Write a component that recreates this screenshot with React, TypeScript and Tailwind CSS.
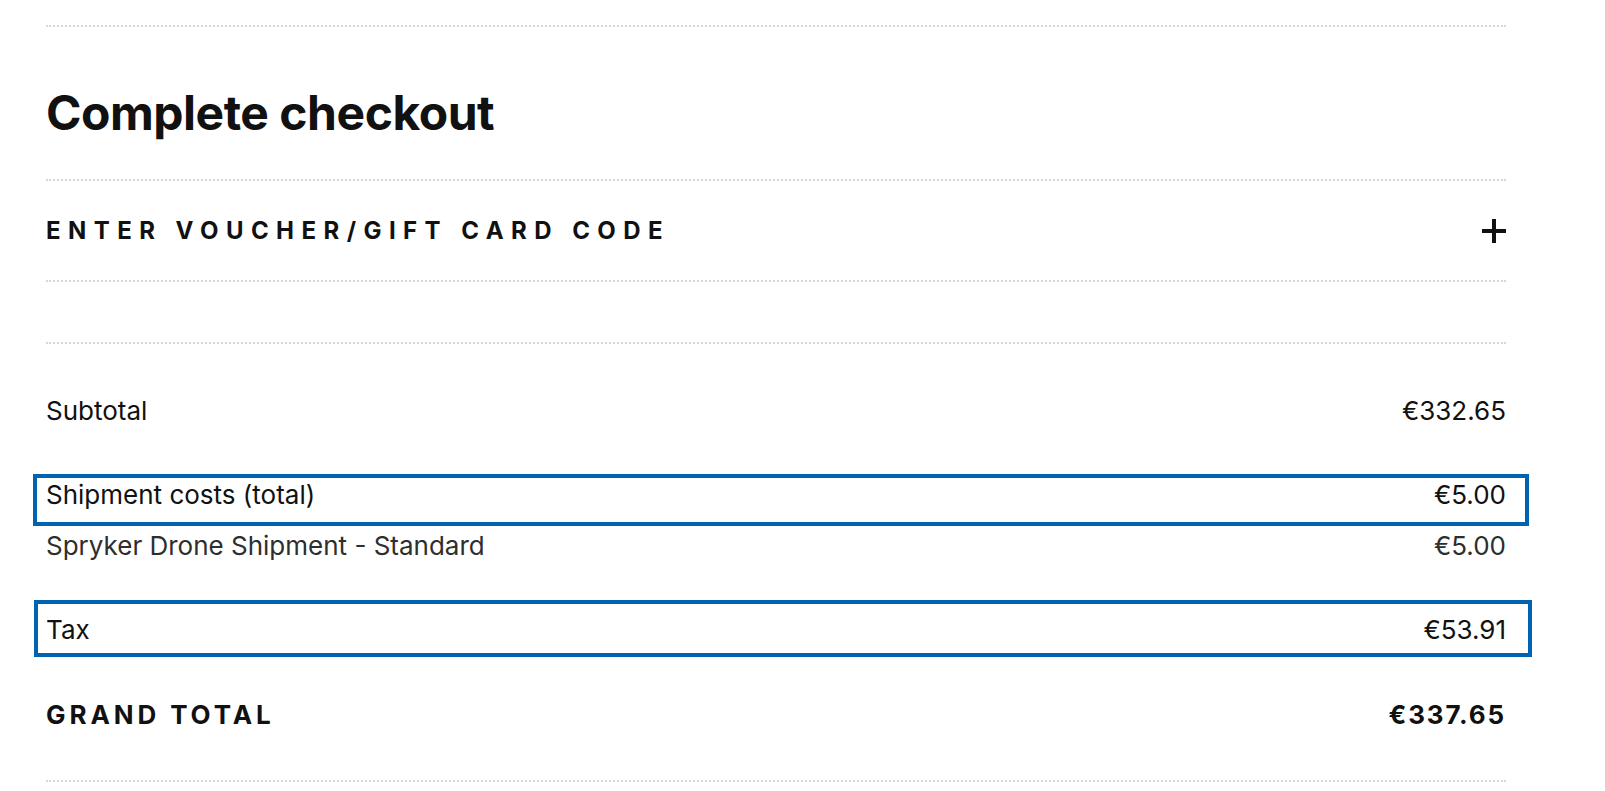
import React from "react";

const Dots = () => <div className="h-0 w-full border-t-2 border-dotted border-[#d6d6d6]" />;

function Row({
  label,
  value,
  className = "",
  textClass = "text-[#111111]",
  children,
}: {
  label: string;
  value: string;
  className?: string;
  textClass?: string;
  children?: React.ReactNode;
}) {
  return (
    <div className={`relative flex h-[40px] items-center justify-between text-[26px] ${textClass} ${className}`}>
      <span>{label}</span>
      <span>{value}</span>
      {children}
    </div>
  );
}

export default function App() {
  return (
    <div className="min-h-[791px] w-full bg-white" style={{ fontFamily: "Inter, 'Noto Sans', sans-serif" }}>
      <div className="ml-[46px] w-[1460px] pt-[25px]">
        <Dots />
        <div className="flex h-[152px] items-center pt-[20px]">
          <h1 className="text-[48px] font-bold leading-none tracking-[-0.01em] text-[#111111]">Complete checkout</h1>
        </div>
        <Dots />
        <div className="flex h-[99px] items-center justify-between">
          <span className="text-[24px] font-bold uppercase tracking-[0.31em] text-[#111111]">Enter voucher/gift card code</span>
          <svg width="24" height="24" viewBox="0 0 24 24" className="block">
            <rect x="10" y="0" width="4" height="24" fill="#111111" />
            <rect x="0" y="10" width="24" height="4" fill="#111111" />
          </svg>
        </div>
        <Dots />
        <div className="h-[60px]" />
        <Dots />
        <Row label="Subtotal" value="€332.65" className="mt-[46px]" />
        <Row label="Shipment costs (total)" value="€5.00" className="mt-[44px]">
          <div className="pointer-events-none absolute left-[-13px] top-0 h-[52px] w-[1496px] border-4 border-[#0063b1]" />
        </Row>
        <Row label="Spryker Drone Shipment - Standard" value="€5.00" className="mt-[11px]" textClass="text-[#2e2e2e]" />
        <Row label="Tax" value="€53.91" className="mt-[44px]">
          <div className="pointer-events-none absolute left-[-12px] top-[-9px] h-[57px] w-[1498px] border-4 border-[#0063b1]" />
        </Row>
        <div className="mt-[45px] flex h-[40px] items-center justify-between text-[26px] font-bold text-[#111111]">
          <span className="tracking-[0.15em]">GRAND TOTAL</span>
          <span className="tracking-[0.07em]">€337.65</span>
        </div>
        <div className="mt-[46px]">
          <Dots />
        </div>
      </div>
    </div>
  );
}
